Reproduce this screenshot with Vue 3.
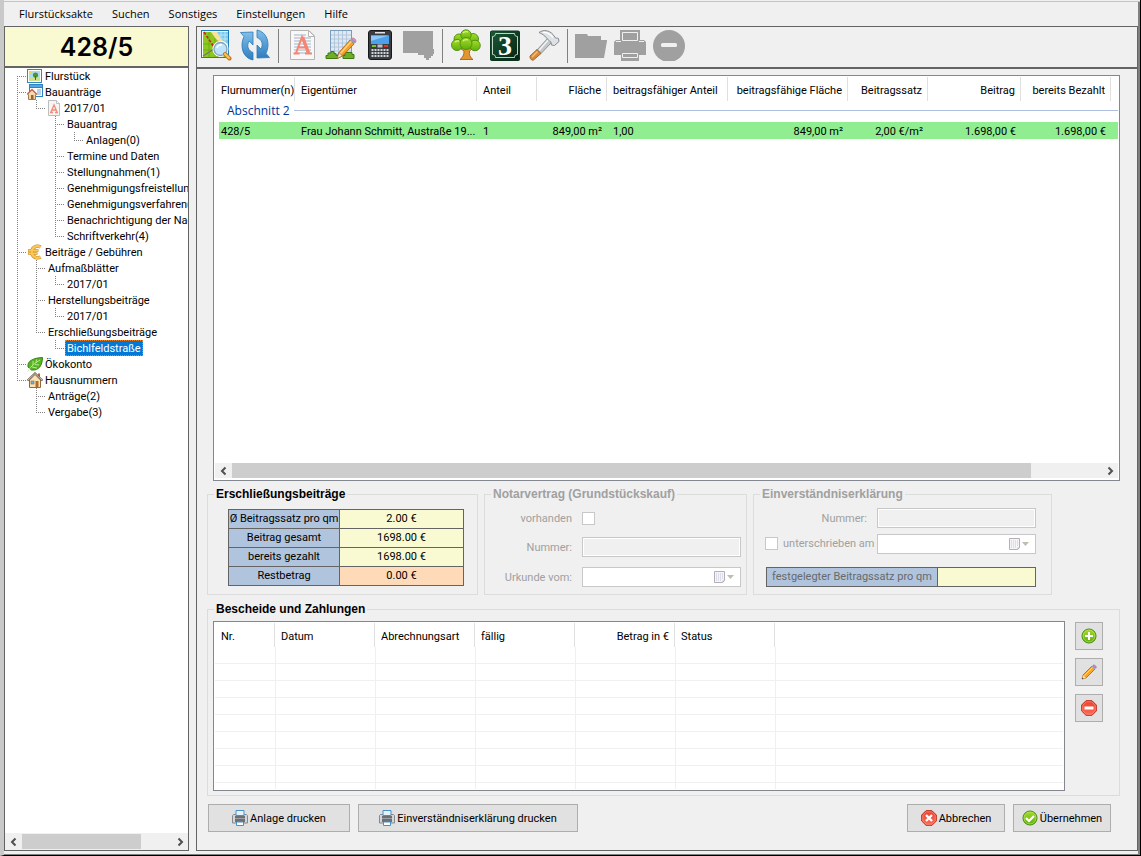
<script setup>
import { ref } from 'vue'

const menu = ['Flurstücksakte', 'Suchen', 'Sonstiges', 'Einstellungen', 'Hilfe']

// guides: f = first, v = line, t = branch, l = last branch, e = empty
const tree = [
  { g: 'f', icon: 'parcel', text: 'Flurstück' },
  { g: 't', icon: 'permit', text: 'Bauanträge' },
  { g: 'vl', icon: 'page', text: '2017/01' },
  { g: 'vet', text: 'Bauantrag' },
  { g: 'vevl', text: 'Anlagen(0)' },
  { g: 'vet', text: 'Termine und Daten' },
  { g: 'vet', text: 'Stellungnahmen(1)' },
  { g: 'vet', text: 'Genehmigungsfreistellung' },
  { g: 'vet', text: 'Genehmigungsverfahren(1)' },
  { g: 'vet', text: 'Benachrichtigung der Nachbarn' },
  { g: 'vel', text: 'Schriftverkehr(4)' },
  { g: 't', icon: 'euro', text: 'Beiträge / Gebühren' },
  { g: 'vt', text: 'Aufmaßblätter' },
  { g: 'vvl', text: '2017/01' },
  { g: 'vt', text: 'Herstellungsbeiträge' },
  { g: 'vvl', text: '2017/01' },
  { g: 'vl', text: 'Erschließungsbeiträge' },
  { g: 'vel', text: 'Bichlfeldstraße' },
  { g: 't', icon: 'leaf', text: 'Ökokonto' },
  { g: 'l', icon: 'house', text: 'Hausnummern' },
  { g: 'et', text: 'Anträge(2)' },
  { g: 'el', text: 'Vergabe(3)' },
]
const selected = ref(17)

const tools = [
  { id: 'map', label: 'Karte' },
  { id: 'refresh', label: 'Aktualisieren' },
  null,
  { id: 'doc', label: 'Antrag' },
  { id: 'plan', label: 'Plan bearbeiten' },
  { id: 'phone', label: 'Rechner' },
  { id: 'note', label: 'Notiz', off: true },
  null,
  { id: 'tree', label: 'Ökokonto' },
  { id: 'three', label: 'Hausnummer' },
  { id: 'hammer', label: 'Erschließung' },
  null,
  { id: 'folder', label: 'Öffnen', off: true },
  { id: 'print', label: 'Drucken', off: true },
  { id: 'minus', label: 'Entfernen', off: true },
]

const sums = [
  ['Ø Beitragssatz pro qm', '2.00 €'],
  ['Beitrag gesamt', '1698.00 €'],
  ['bereits gezahlt', '1698.00 €'],
  ['Restbetrag', '0.00 €'],
]
</script>

<template>
  <div class="window">
    <svg class="defs" aria-hidden="true">
      <linearGradient id="gBlue" x1="0" y1="0" x2="0" y2="1"><stop offset="0" stop-color="#7fc0ec" /><stop offset="1" stop-color="#2f7cbf" /></linearGradient>
      <linearGradient id="gGreen" x1="0" y1="0" x2="0" y2="1"><stop offset="0" stop-color="#a6dc2a" /><stop offset="1" stop-color="#5fae0c" /></linearGradient>
      <linearGradient id="gRed" x1="0" y1="0" x2="0" y2="1"><stop offset="0" stop-color="#e8432c" /><stop offset="1" stop-color="#ff6a58" /></linearGradient>
      <linearGradient id="gPlate" x1="0" y1="0" x2="1" y2="1"><stop offset="0" stop-color="#1c5a35" /><stop offset="1" stop-color="#042212" /></linearGradient>

      <symbol id="map" viewBox="0 0 32 32">
        <rect x="1.5" y="1.5" width="27" height="27" fill="#fff" stroke="#1a7dba" />
        <path d="M3 3h9l4 6 5 4 7 15H3z" fill="#8cc820" />
        <path d="M3 15h14M3 21h16M9 3v25M15 9v19" stroke="#6fae12" />
        <path d="M11 3h6l5 7 6 5v13h-2L21 14l-5-4z" fill="#fbe1a0" />
        <path d="M17 3h11v12l-6-4z" fill="#7ccbee" />
        <path d="M21 3v7M25 3v10M18 6h10M20 10h8" stroke="#b9e4f7" />
        <path d="M4 3l8 12 6 13" fill="none" stroke="#d81e1e" stroke-width="1.6" stroke-dasharray="3 1.6" />
        <path d="M3 27l11-7" stroke="#777" stroke-width="1.4" />
        <circle cx="20.500" cy="20" r="6.500" fill="#c9e8fb" stroke="#fff" stroke-width="3" />
        <circle cx="20.500" cy="20" r="6.500" fill="#bfe3fa" stroke="#7fa3c0" stroke-width="1.300" />
        <path d="M17 19a4 4 0 0 1 5-3" fill="none" stroke="#fff" stroke-width="1.600" />
        <path d="M25 25l4.500 4.500" stroke="#c77a1c" stroke-width="4" stroke-linecap="round" />
        <path d="M25 25l4 4" stroke="#ffc35a" stroke-width="2" stroke-linecap="round" />
      </symbol>
      <symbol id="refresh" viewBox="0 0 32 32">
        <path d="M1.500 3.500l12.500-.500v13l-4-4c-2.500 5-1 9.500 4 11.500v7.500C3.500 29 .500 17 5 7.500z" fill="url(#gBlue)" stroke="#2d78b5" stroke-width=".8" />
        <path d="M30.500 28.500L18 29V16l4 4c2.500-5 1-9.500-4-11.500V1C28.500 3 31.500 15 27 24.500z" fill="url(#gBlue)" stroke="#2d78b5" stroke-width=".8" />
      </symbol>
      <symbol id="doc" viewBox="0 0 32 32">
        <path d="M4.500 1.500H23l5.500 5.500v23.500h-24z" fill="#f8f8f8" stroke="#b5b5b5" />
        <path d="M22.500 1.500V7.500H28.500z" fill="#fff" stroke="#b5b5b5" />
        <path d="M8 6h12M8 9h17M8 12h17M8 15h17M8 18h17M8 21h17M8 24h17" stroke="#9fb4c8" />
        <path d="M7.500 24.500h6M19 24.500h7M10 24L16 8l6.500 16M12.500 18.500h8" fill="none" stroke="#f58674" stroke-width="2" />
        <path d="M16.500 8l6 16" stroke="#f58674" stroke-width="3.500" />
      </symbol>
      <symbol id="plan" viewBox="0 0 32 32">
        <rect x="5.500" y="1.500" width="21" height="24" fill="#dfe9f3" stroke="#7b9cbb" />
        <path d="M9.500 2v23M13.500 2v23M17.500 2v23M21.500 2v23M6 6h20M6 10h20M6 14h20M6 18h20M6 22h20" stroke="#b1c6da" />
        <path d="M1 29.500v-3h2v-2.500h3v-1.500h3v2h2v2h2v3zM18 29.500v-3h2v-3h7v2h2v4z" fill="#6fae28" stroke="#3f7a10" />
        <path d="M12 29.500l2-6L25 11l4 4-11.500 12z" fill="#f5a02a" stroke="#a95f10" stroke-width=".8" />
        <path d="M15 25L26.500 12" stroke="#ffd37a" stroke-width="1.500" />
        <path d="M12 29.500l2-6 3.500 3.500z" fill="#f8dfb4" stroke="#7a5a30" stroke-width=".6" />
        <path d="M25 11l1.500-1.500 4 4L29 15z" fill="#9aa0b0" />
        <path d="M26.500 9.500c2-2 6 2 4 4z" fill="#d68fc0" stroke="#a0608c" stroke-width=".5" />
      </symbol>
      <symbol id="phone" viewBox="0 0 32 32">
        <rect x="4.500" y="1.500" width="23" height="29" rx="2.500" fill="#3a3d42" stroke="#16181b" />
        <rect x="11" y="3" width="10" height="1.500" fill="#dfe3e6" />
        <rect x="7" y="6.500" width="18" height="8.500" fill="#4da0ea" />
        <path d="M7 6.500h18L7 12z" fill="#8cc8f8" />
        <rect x="8" y="16" width="4" height="2" fill="#74c42a" /><rect x="20" y="16" width="4" height="2" fill="#e0352b" /><rect x="13.500" y="15.500" width="5" height="3" fill="#b9bec4" />
        <path d="M7.500 21h17M7.500 24h17M7.500 27h17" stroke="#d2d6da" stroke-width="2" stroke-dasharray="2 1" />
      </symbol>
      <symbol id="note" viewBox="0 0 32 32"><path d="M0 2h30v18h1v5h-1v2h-2v2h-2v2h-3v-2h-2v-3h-6v-2H0z" fill="#a0a0a0" /></symbol>
      <symbol id="tree" viewBox="0 0 32 32">
        <path d="M14 18l-4-2 1 4 3 2c0 4-1 6-4 8.500h13c-3-2-4-5-3.500-8.500L23 19v-4l-5 4z" fill="#e0952f" stroke="#9c5a12" stroke-width=".8" />
        <g fill="url(#gGreen)" stroke="#4b8f0c" stroke-width=".9"><circle cx="9" cy="10" r="5" /><circle cx="23" cy="10" r="5.500" /><circle cx="16" cy="6" r="5.200" /><circle cx="7" cy="16" r="5.500" /><circle cx="25" cy="16.500" r="5.300" /><circle cx="16" cy="14.500" r="6" /></g>
        <path d="M13 4a4 3 0 0 1 5-1M5 13a4 3 0 0 1 4-1M13 12a4 3 0 0 1 5-1" fill="none" stroke="#d4f58c" stroke-width="1.300" />
      </symbol>
      <symbol id="three" viewBox="0 0 32 32">
        <rect x="1" y="2" width="30" height="30" rx="2" fill="#0a2d19" />
        <rect x="1.500" y="2" width="29" height="29" rx="1.500" fill="url(#gPlate)" stroke="#0a3a20" />
        <path d="M6.500 4.500h19c0 2 1 3 3 3v18c-2 0-3 1-3 3h-19c0-2-1-3-3-3v-18c2 0 3-1 3-3z" fill="none" stroke="#d4e4d8" stroke-width=".9" />
      </symbol>
      <symbol id="hammer" viewBox="0 0 32 32">
        <path d="M20 9l4 4-11 11.500-4-3.500z" fill="#c3c7cb" stroke="#7c8288" stroke-width=".8" />
        <path d="M21 10L11 21.500" stroke="#f4f5f6" stroke-width="1.400" />
        <path d="M11 3.500c4-3 10-2.500 14 2l2.500 3.500c1 .500 2-.500 3 .500l.5 3-4.500 4-3-.500c-.5-2 0-3-1.500-3.500l-3.500-3.500C16.500 6 14 5 11 3.500z" fill="#dfe2e5" stroke="#797f86" stroke-width=".9" />
        <path d="M15 3.500c4-.500 7 1.500 10 5" fill="none" stroke="#fff" stroke-width="1.200" />
        <path d="M9 20.500l4 4-7.500 6.500c-2 1-4-2-3.500-4z" fill="#d88a3a" stroke="#94531a" stroke-width=".8" />
        <path d="M9.500 22.500L4 28" stroke="#f5be7c" stroke-width="1.400" />
      </symbol>
      <symbol id="folder" viewBox="0 0 32 32"><path d="M0 5h12l1 2h13v4h6v1l-3 17H0z" fill="#a0a0a0" /></symbol>
      <symbol id="print" viewBox="0 0 32 32">
        <path d="M6 1h20v10h4l2 2v13h-7v6H7v-6H0V13l2-2h4z" fill="#a0a0a0" />
        <path d="M8.500 3.500h15v8h-15zM8.500 24.500h15v4h-15zM2 12.500h5M25 12.500h5" fill="none" stroke="#f0f0f0" />
      </symbol>
      <symbol id="minus" viewBox="0 0 32 32"><circle cx="16" cy="17" r="16" fill="#a0a0a0" /><rect x="8" y="14" width="16" height="4" rx="1.500" fill="#f0f0f0" /></symbol>

      <symbol id="parcel" viewBox="0 0 16 16">
        <rect x=".5" y="1.500" width="14" height="13" fill="#fff" stroke="#2f86c4" />
        <rect x="2" y="3" width="11" height="10" fill="#a9dcf5" /><rect x="2" y="10" width="11" height="3" fill="#cfe08a" />
        <circle cx="4" cy="5" r="1.300" fill="#f8d548" /><circle cx="8.500" cy="7" r="2.600" fill="#4f9431" /><path d="M8.500 8v4" stroke="#7a5523" />
      </symbol>
      <symbol id="permit" viewBox="0 0 16 16">
        <rect x="2.500" y=".5" width="13" height="12" fill="#fff" stroke="#2e81c2" /><rect x="2.500" y=".5" width="13" height="3" fill="#54a7e2" stroke="#2e81c2" />
        <path d="M10 6h4M10 8h4M10 10h4" stroke="#6fa7d3" />
        <path d="M1.500 10v5.500h7V10" fill="#f4d3a4" stroke="#a97843" /><path d="M0 10.500l5-5 5 5" fill="#f6dcb8" stroke="#b4684a" stroke-width="1.400" /><rect x="4" y="11" width="2.500" height="4.500" fill="#9c6330" />
      </symbol>
      <symbol id="page" viewBox="0 0 16 16">
        <path d="M2.500.5h8l3 3v12h-11z" fill="#f6f6f6" stroke="#bdbdbd" /><path d="M10.500.5v3h3" fill="#fff" stroke="#bdbdbd" />
        <path d="M4 12.500h3M9 12.500h3M5 12l3-7 3 7M6 10h4" fill="none" stroke="#f48b78" stroke-width="1.300" />
      </symbol>
      <symbol id="euro" viewBox="0 0 16 16">
        <path d="M13.500 3a5.800 5.800 0 1 0 0 10" fill="none" stroke="#c98a1e" stroke-width="3.600" /><path d="M1 6.500h10.500M1 9.500h9.500" stroke="#c98a1e" stroke-width="2.400" />
        <path d="M13.500 3a5.800 5.800 0 1 0 0 10" fill="none" stroke="#fbc65a" stroke-width="2.400" /><path d="M1.500 6.500h9.500M1.500 9.500h8.500" stroke="#fbc65a" stroke-width="1.400" />
      </symbol>
      <symbol id="leaf" viewBox="0 0 16 16">
        <path d="M1 11C0 5 6 2 15.500 1.500 15.500 9 12 15 4.500 14z" fill="#58b424" stroke="#2b7a10" stroke-width=".9" />
        <path d="M.5 15.500C4 10 8 7 13 4M6 9V5M9 7l.5-3.500M5 11l5 1M8 8.500l4 .5" fill="none" stroke="#c5ee9a" stroke-width=".9" />
      </symbol>
      <symbol id="house" viewBox="0 0 16 16">
        <path d="M2.500 8v7.500h11V8L8 2.500z" fill="#fbe3b8" stroke="#8c6a3c" /><rect x="11" y="1.500" width="2" height="4" fill="#b0633c" />
        <path d="M.5 8.500L8 1.200l7.500 7.300" fill="none" stroke="#6d5a4a" stroke-width="1.800" /><path d="M1 8L8 1.500 15 8" fill="none" stroke="#f2ece2" stroke-width=".7" />
        <rect x="4" y="9" width="3" height="3" fill="#6db2e4" stroke="#8c6a3c" stroke-width=".6" /><rect x="8.500" y="9" width="3" height="6.500" fill="#b46c2c" />
      </symbol>
      <symbol id="printer" viewBox="0 0 16 16">
        <path d="M1.500 4.500h13l1 1v7.500h-15V5.500z" fill="#d4d6d8" stroke="#85898d" /><path d="M3 6h10v6H3z" fill="#6b7075" />
        <path d="M4 .5h8v5H4z" fill="#e4f2fc" stroke="#4a90c8" /><path d="M3 8.500h10" stroke="#9ca2a7" /><path d="M4.500 12h7v3.500h-7z" fill="#fff" stroke="#4a90c8" />
      </symbol>
      <symbol id="add" viewBox="0 0 16 16"><circle cx="8" cy="8" r="7" fill="url(#gGreen)" stroke="#3f8408" /><circle cx="8" cy="8" r="6" fill="none" stroke="#b9e45e" stroke-width=".7" /><path d="M8 4v8M4 8h8" stroke="#fff" stroke-width="2" /></symbol>
      <symbol id="pencil" viewBox="0 0 16 16">
        <path d="M1 15l1-4 9-9 3 3-9 9z" fill="#f8a52c" stroke="#a4641a" stroke-width=".8" /><path d="M3.500 11.500l8-8" stroke="#ffdf96" />
        <path d="M1 15l1-4 3 3z" fill="#f7dfb8" /><path d="M1 15l.4-1.600 1.200 1.200z" fill="#222" /><path d="M10.500 2.500L12 1l3 3-1.500 1.500z" fill="#9ba6bb" /><path d="M12 1.300c1.300-1.300 4.300 1.500 3 2.900z" fill="#d58bc0" stroke="#a05c90" stroke-width=".5" />
      </symbol>
      <symbol id="remove" viewBox="0 0 16 16"><path d="M5 .7h6L15.300 5v6L11 15.300H5L.7 11V5z" fill="url(#gRed)" stroke="#b92a1b" stroke-linejoin="round" /><path d="M5.300 1.800h5.400l3.500 3.500v5.400l-3.500 3.500H5.300l-3.500-3.500V5.300z" fill="none" stroke="#ff9d8e" stroke-width=".6" /><rect x="3.500" y="6.500" width="9" height="3" fill="#fff" /></symbol>
      <symbol id="cancel" viewBox="0 0 16 16"><path d="M5 .7h6L15.300 5v6L11 15.300H5L.7 11V5z" fill="url(#gRed)" stroke="#b92a1b" stroke-linejoin="round" /><path d="M5.300 1.800h5.400l3.500 3.500v5.400l-3.500 3.500H5.300l-3.500-3.500V5.300z" fill="none" stroke="#ff9d8e" stroke-width=".6" /><path d="M5 5l6 6M11 5l-6 6" stroke="#fff" stroke-width="2.400" /></symbol>
      <symbol id="accept" viewBox="0 0 16 16"><circle cx="8" cy="8" r="7" fill="url(#gGreen)" stroke="#3f8408" /><circle cx="8" cy="8" r="6" fill="none" stroke="#b9e45e" stroke-width=".7" /><path d="M4 8l3 3 5-5" fill="none" stroke="#fff" stroke-width="2.200" /></symbol>
      <symbol id="calendar" viewBox="0 0 22 14">
        <path d="M1.500 1.500h10v9l-2 2h-8z" fill="#f6f6f9" stroke="#b6aeb4" /><path d="M3 4h7M3 6h7M3 8h7M3 10h5" stroke="#bcc6da" stroke-dasharray="1 1" /><path d="M12 10.500H9.500V13z" fill="#b6aeb4" />
        <path d="M14 5h7l-3.500 4z" fill="#bdbdb2" />
      </symbol>
      <symbol id="left" viewBox="0 0 10 10"><path d="M6.500 1.500L3 5l3.500 3.500" fill="none" stroke="#505050" stroke-width="2" /></symbol>
      <symbol id="right" viewBox="0 0 10 10"><path d="M3.500 1.500L7 5 3.500 8.500" fill="none" stroke="#505050" stroke-width="2" /></symbol>
    </svg>

    <nav class="menu"><button v-for="m in menu" :key="m" type="button">{{ m }}</button></nav>

    <div class="body">
      <aside class="sidebar">
        <h1>428/5</h1>
        <ul class="tree" role="tree">
          <li v-for="(n, i) in tree" :key="i" role="treeitem" :aria-selected="i === selected" @click="selected = i">
            <span v-for="(c, k) in n.g" :key="k" class="guide" :class="['g-' + c, { stub: k === n.g.length - 1 }]"></span>
            <svg v-if="n.icon" class="i16"><use :href="'#' + n.icon" /></svg>
            <span class="label" :class="{ on: i === selected }">{{ n.text }}</span>
          </li>
        </ul>
        <div class="scroll">
          <button type="button" aria-label="Nach links"><svg class="i10"><use href="#left" /></svg></button>
          <div class="track"><div class="thumb side-thumb"></div></div>
          <button type="button" aria-label="Nach rechts"><svg class="i10"><use href="#right" /></svg></button>
        </div>
      </aside>

      <main class="main">
        <div class="toolbar" role="toolbar">
          <template v-for="(t, i) in tools" :key="i">
            <button v-if="t" type="button" :aria-label="t.label" :disabled="t.off">
              <svg class="i32"><use :href="'#' + t.id" /><text v-if="t.id === 'three'" class="digit" x="16" y="26" text-anchor="middle">3</text></svg>
            </button>
            <span v-else class="sep"></span>
          </template>
        </div>

        <div class="content">
          <div class="list">
            <div class="list-body">
              <table class="owners">
                <colgroup><col class="w76" /><col class="w182" /><col class="w60" /><col class="w70" /><col class="w121" /><col class="w120" /><col class="w80" /><col class="w93" /><col class="w90" /><col /></colgroup>
                <thead>
                  <tr><th>Flurnummer(n)</th><th>Eigentümer</th><th>Anteil</th><th class="r">Fläche</th><th>beitragsfähiger Anteil</th><th class="r">beitragsfähige Fläche</th><th class="r">Beitragssatz</th><th class="r">Beitrag</th><th class="r">bereits Bezahlt</th><th></th></tr>
                </thead>
                <tbody>
                  <tr class="group"><td colspan="10"><div><span>Abschnitt 2</span></div></td></tr>
                  <tr class="hit"><td>428/5</td><td>Frau Johann Schmitt, Austraße 19...</td><td>1</td><td class="r">849,00 m²</td><td>1,00</td><td class="r">849,00 m²</td><td class="r">2,00 €/m²</td><td class="r">1.698,00 €</td><td class="r">1.698,00 €</td><td></td></tr>
                </tbody>
              </table>
            </div>
            <div class="scroll inset">
              <button type="button" aria-label="Nach links"><svg class="i10"><use href="#left" /></svg></button>
              <div class="track"><div class="thumb list-thumb"></div></div>
              <button type="button" aria-label="Nach rechts"><svg class="i10"><use href="#right" /></svg></button>
            </div>
          </div>

          <div class="boxes">
            <fieldset class="sum-box">
              <legend>Erschließungsbeiträge</legend>
              <table class="sums">
                <tbody><tr v-for="s in sums" :key="s[0]"><th scope="row">{{ s[0] }}</th><td>{{ s[1] }}</td></tr></tbody>
              </table>
            </fieldset>

            <fieldset class="notary-box" disabled>
              <legend>Notarvertrag (Grundstückskauf)</legend>
              <div class="notary">
                <label for="vorhanden">vorhanden</label><input id="vorhanden" type="checkbox" />
                <label for="nvNummer">Nummer:</label><input id="nvNummer" class="field" type="text" />
                <label for="urkunde">Urkunde vom:</label>
                <div class="date"><input id="urkunde" type="text" /><button type="button" aria-label="Kalender"><svg class="cal"><use href="#calendar" /></svg></button></div>
              </div>
            </fieldset>

            <fieldset class="consent-box" disabled>
              <legend>Einverständniserklärung</legend>
              <div class="consent">
                <label class="num" for="evNummer">Nummer:</label><input id="evNummer" class="field" type="text" />
                <label class="check"><input type="checkbox" />unterschrieben am</label>
                <div class="date"><input type="text" aria-label="unterschrieben am" /><button type="button" aria-label="Kalender"><svg class="cal"><use href="#calendar" /></svg></button></div>
                <div class="fixed-rate"><label for="satz">festgelegter Beitragssatz pro qm</label><input id="satz" type="text" /></div>
              </div>
            </fieldset>
          </div>

          <fieldset class="notices-box">
            <legend>Bescheide und Zahlungen</legend>
            <div class="notices">
              <div class="grid-box">
                <table class="payments">
                  <colgroup><col class="w60" /><col class="w100" /><col class="w100" /><col class="w100" /><col class="w100" /><col class="w100" /><col /></colgroup>
                  <thead><tr><th>Nr.</th><th>Datum</th><th>Abrechnungsart</th><th>fällig</th><th class="r">Betrag in €</th><th>Status</th><th></th></tr></thead>
                  <tbody><tr v-for="r in 9" :key="r"><td v-for="c in 7" :key="c"></td></tr></tbody>
                </table>
              </div>
              <div class="side-buttons">
                <button class="btn" type="button" aria-label="Hinzufügen"><svg class="i16"><use href="#add" /></svg></button>
                <button class="btn" type="button" aria-label="Bearbeiten"><svg class="i16"><use href="#pencil" /></svg></button>
                <button class="btn" type="button" aria-label="Löschen"><svg class="i16"><use href="#remove" /></svg></button>
              </div>
            </div>
          </fieldset>

          <div class="actions">
            <button class="btn w142" type="button"><svg class="i16"><use href="#printer" /></svg><span>Anlage drucken</span></button>
            <button class="btn w220" type="button"><svg class="i16"><use href="#printer" /></svg><span>Einverständniserklärung drucken</span></button>
            <span class="grow"></span>
            <button class="btn w98" type="button"><svg class="i16"><use href="#cancel" /></svg><span>Abbrechen</span></button>
            <button class="btn w98" type="button"><svg class="i16"><use href="#accept" /></svg><span>Übernehmen</span></button>
          </div>
        </div>
      </main>
    </div>
  </div>
</template>

<style>
body { background: #f0f0f0; }
</style>

<style scoped>
* { box-sizing: border-box; }
.window {
  min-height: 100vh; display: flex; flex-direction: column; position: relative;
  font: 11px/16px Roboto, "Liberation Sans", sans-serif; color: #000; background: #f0f0f0;
  border-left: 4px solid #c9c9c9; border-right: 1px solid #000; border-bottom: 1px solid #000;
  box-shadow: inset 0 1px #f0f0f0, inset 0 2px #c4c4c4, inset -2px 0 #808080, inset 0 -1px #808080;
  padding: 0 2px 4px 0;
}
.defs { position: absolute; width: 0; height: 0; }
button { font: inherit; color: inherit; border: 0; background: none; padding: 0; margin: 0; }
.i10 { width: 10px; height: 10px; display: block; }
.i16 { width: 16px; height: 16px; display: block; flex: none; }
.i32 { width: 32px; height: 32px; display: block; }
.digit { font: bold 28px "Liberation Serif", serif; fill: #fff; }
.grow { flex: 1; }

.menu { height: 26px; display: flex; align-items: center; gap: 19px; padding: 2px 15px 0; font: 11px/16px "Open Sans", sans-serif; }
.body { flex: 1; display: flex; gap: 7px; }

.sidebar { width: 185px; flex: none; display: flex; flex-direction: column; border: 1px solid #646464; background: #fff; }
h1 { margin: 0; height: 41px; background: #fafad2; border-bottom: 2px solid #646464; text-align: center; font: 600 25px/41px Inter, sans-serif; }
.tree { list-style: none; margin: 0; padding: 0 0 0 12px; flex: 1; overflow: hidden; }
.tree li { display: flex; height: 16px; white-space: nowrap; }
.guide { width: 19px; flex: none; background-repeat: no-repeat; --v: repeating-linear-gradient(to bottom, #808080 0 1px, transparent 1px 2px); --h: repeating-linear-gradient(to right, #808080 0 1px, transparent 1px 2px); }
.stub { width: 10px; }
.g-v { background-image: var(--v); background-size: 1px 100%; }
.g-t { background-image: var(--v), var(--h); background-size: 1px 100%, 100% 1px; background-position: 0 0, 0 8px; }
.g-l { background-image: var(--v), var(--h); background-size: 1px 8px, 100% 1px; background-position: 0 0, 0 8px; }
.g-f { background-image: var(--v), var(--h); background-size: 1px 8px, 100% 1px; background-position: 0 8px, 0 8px; }
.label { padding: 0 2px; line-height: 18px; }
.on { background: #0078d7; color: #fff; outline: 1px dotted #f08020; outline-offset: -1px; }

.scroll { height: 17px; display: flex; align-items: center; background: #f0f0f0; flex: none; }
.scroll button { width: 17px; display: flex; justify-content: center; flex: none; }
.track { flex: 1; }
.thumb { height: 15px; background: #cdcdcd; }
.side-thumb { width: 80%; }
.list-thumb { width: 92%; }
.inset { height: 15px; margin: 0 1px 2px; }

.main { flex: 1; min-width: 0; display: flex; flex-direction: column; border: 1px solid #646464; }
.toolbar { height: 42px; flex: none; display: flex; gap: 7px; padding: 2px 3px; border-bottom: 2px solid #646464; }
.toolbar button { height: 32px; }
.sep { width: 1px; height: 34px; background: #808080; }

.content { flex: 1; display: flex; flex-direction: column; padding: 6px 17px 18px 10px; }
.list { flex: 1; margin: 0 0 5px 6px; display: flex; flex-direction: column; border: 1px solid #828790; background: #fff; }
.list-body { flex: 1; padding: 1px 1px 0 5px; }
table { border-collapse: separate; border-spacing: 0; table-layout: fixed; width: 100%; }
th, td { padding: 2px 5px 0 6px; font-weight: normal; text-align: left; white-space: nowrap; overflow: hidden; line-height: 15px; }
th.r, td.r { text-align: right; }
thead th { height: 24px; border-right: 1px solid #e0e0e0; }
thead th:last-child { border-right: 0; }
.owners th:first-child { padding-left: 2px; padding-right: 0; }
.owners td { height: 17px; }
.hit td { background: #90ee90; }
.hit td:first-child { padding-left: 2px; }
.owners .group td { height: 21px; padding: 0 0 2px 8px; }
.group div { display: flex; align-items: center; gap: 4px; color: #003399; font: 12px/16px "Open Sans", sans-serif; }
.group div::after { content: ""; flex: 1; height: 1px; background: #aebfe0; }
.w60 { width: 60px; } .w70 { width: 70px; } .w76 { width: 76px; } .w80 { width: 80px; } .w90 { width: 90px; } .w93 { width: 93px; }
.w98 { width: 98px; } .w100 { width: 100px; } .w120 { width: 120px; } .w121 { width: 121px; } .w142 { width: 142px; } .w182 { width: 182px; } .w220 { width: 220px; }

fieldset { margin: 0; padding: 0; border: 1px solid #dcdcdc; min-width: 0; }
legend { margin-left: 6px; padding: 0 2px; height: 16px; font: bold 12px/16px "Liberation Sans", sans-serif; white-space: nowrap; }
fieldset:disabled { color: #a0a0a0; }
.boxes { display: flex; gap: 6px; margin-bottom: 6px; }
.sum-box { width: 271px; }
.sums { width: 236px; margin: 7px 13px 8px 20px; border: 1px solid #646464; border-width: 1px 0 0 1px; }
.sums th, .sums td { height: 19px; padding: 0; line-height: 16px; text-align: center; border: 1px solid #646464; border-width: 0 1px 1px 0; }
.sums th { width: 111px; background: #b0c4de; }
.sums td { background: #fafad2; }
.sums tr:last-child td { background: #ffdab9; }

.notary-box { width: 263px; }
.notary { padding: 7px 5px 7px 0; display: grid; grid-template-columns: 87px minmax(0, 1fr); gap: 10px; grid-template-rows: 18px 20px 20px; align-items: center; }
.notary label { text-align: right; padding-top: 2px; }
.consent-box { width: 299px; }
.consent { padding: 6px 15px 7px 11px; display: grid; grid-template-columns: 106px minmax(0, 1fr); gap: 6px; grid-template-rows: 20px 20px 27px; align-items: center; }
.num { text-align: right; padding: 2px 4px 0 0; }
.check { display: flex; align-items: center; gap: 5px; white-space: nowrap; }
input { margin: 0; font: inherit; border-radius: 0; outline: 0; }
input[type="checkbox"] { appearance: none; width: 13px; height: 13px; flex: none; background: #fff; border: 1px solid #c8c8c8; }
.check input { margin-bottom: 2px; }
.field { width: 100%; height: 20px; padding: 0 4px; background: #f0f0f0; border: 1px solid #c8c8c8; box-shadow: inset 0 0 0 1px #fff; }
.date { height: 20px; display: flex; align-items: center; background: #fff; border: 1px solid #c8c8c8; }
.date input { flex: 1; min-width: 0; border: 0; background: none; }
.date button { margin-right: 5px; }
.cal { width: 22px; height: 14px; display: block; }
.fixed-rate { grid-column: 1 / 3; align-self: end; display: flex; height: 20px; border: 1px solid #646464; margin-left: 1px; color: #696969; }
.fixed-rate label { width: 171px; flex: none; line-height: 18px; background: #b0c4de; border-right: 1px solid #646464; text-align: center; }
.fixed-rate input { flex: 1; min-width: 0; border: 0; background: #fafad2; }

.notices-box { margin-bottom: 8px; }
.notices { display: flex; gap: 10px; padding: 4px 16px 4px 5px; }
.grid-box { flex: 1; border: 1px solid #828790; background: #fff; padding: 1px; }
.payments td { height: 17px; padding: 0; border-bottom: 1px solid #f0f0f0; border-left: 1px solid #f0f0f0; }
.payments td:first-child { border-left: 0; }
.payments tr:last-child td { height: 6px; border-bottom: 0; }
.side-buttons { display: flex; flex-direction: column; gap: 8px; padding-top: 1px; }
.btn { height: 28px; display: flex; align-items: center; justify-content: center; gap: 2px; background: #e1e1e1; border: 1px solid #adadad; white-space: nowrap; }
.btn span { padding-top: 2px; }
.side-buttons .btn { width: 28px; }
.actions { display: flex; gap: 8px; padding: 0 9px 0 1px; }
</style>
